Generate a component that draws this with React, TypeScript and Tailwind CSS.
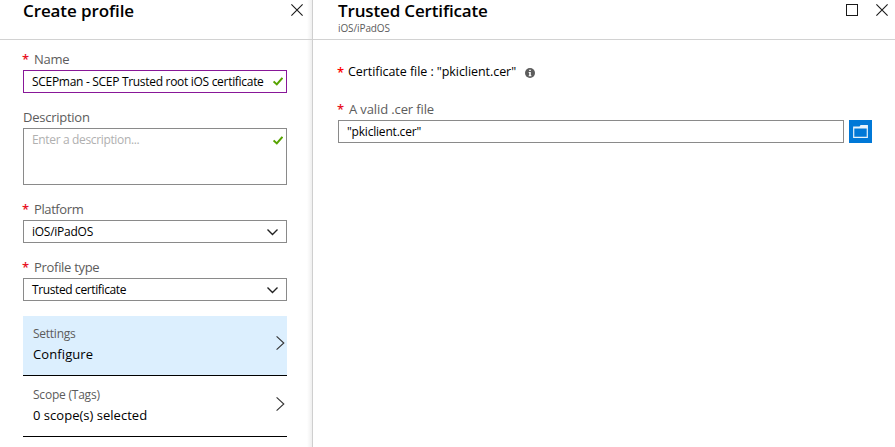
import type { ReactNode } from "react";

function CloseIcon() {
  return (
    <svg width="12" height="12" viewBox="0 0 12 12" fill="none" stroke="#1a1a1a" strokeWidth="1.1">
      <path d="M0.4 0.4 11.6 11.6M11.6 0.4 0.4 11.6" />
    </svg>
  );
}

function CheckIcon() {
  return (
    <svg width="10" height="9" viewBox="0 0 10 9" fill="none" stroke="#57a300" strokeWidth="2">
      <path d="M0.6 4.4 3.8 7.4 9.4 0.8" />
    </svg>
  );
}

function ChevronDown() {
  return (
    <svg width="12" height="8" viewBox="0 0 12 8" fill="none" stroke="#222" strokeWidth="1.4">
      <path d="M0.5 1.6 5.5 6.6 10.5 1.6" />
    </svg>
  );
}

function ChevronRight() {
  return (
    <svg width="9" height="14" viewBox="0 0 9 14" fill="none" stroke="#333" strokeWidth="1.1">
      <path d="M0.6 0.4 7.8 7 0.6 13.6" />
    </svg>
  );
}

function Star({ className = "text-[#e81123]" }: { className?: string }) {
  return <span className={`-ml-px w-3 shrink-0 text-[13px] font-semibold ${className}`}>*</span>;
}

function Label({ children, tracking, required = false }: { children: ReactNode; tracking: string; required?: boolean }) {
  return (
    <div className={`flex h-5 text-[13px] text-[#5c5c5c] ${required ? "leading-[18px]" : "leading-[19px]"}`}>
      {required && <Star />}
      <span className={tracking}>{children}</span>
    </div>
  );
}

function Select({ value, tracking }: { value: string; tracking: string }) {
  return (
    <div className="flex h-[23px] items-center justify-between border border-[#8a8a8a] pr-[7px] pl-2">
      <span className={`text-[12px] leading-5 ${tracking}`}>{value}</span>
      <ChevronDown />
    </div>
  );
}

function PickerRow({ title, value, active = false, titleTracking, valueTracking }: { title: string; value: string; active?: boolean; titleTracking: string; valueTracking: string }) {
  return (
    <div className={`flex justify-between border-b border-black pr-[2px] pl-[10px] ${active ? "h-[60px] bg-[#dceffe]" : "h-[61px] pt-px"}`}>
      <div className="pt-2">
        <div className={`h-5 text-[12px] leading-5 text-[#5c5c5c] ${titleTracking}`}>{title}</div>
        <div className={`h-5 text-[13px] leading-5 ${valueTracking}`}>{value}</div>
      </div>
      <div className="pt-5">
        <ChevronRight />
      </div>
    </div>
  );
}

export default function App() {
  return (
    <div className="flex h-[447px] w-[895px] overflow-hidden bg-white font-['Open_Sans','Noto_Sans',sans-serif] whitespace-nowrap text-black">
      <section className="flex w-[313px] shrink-0 border-r border-[#cfcfcf]">
        <div className="w-[307px] shrink-0">
          <header className="flex h-10 justify-between border-b border-[#d2d2d2] pr-1 pl-[23px]">
            <h1 className="text-[17px] leading-[22px] font-semibold tracking-[-0.1px]">Create profile</h1>
            <div className="pt-1">
              <CloseIcon />
            </div>
          </header>
          <div className="w-[287px] pt-[10px] pl-[23px]">
            <Label required tracking="tracking-[-0.3px]">Name</Label>
            <div className="flex h-[23px] items-center justify-between border border-[#881798] pr-[3px] pl-2">
              <span className="text-[12px] leading-5 tracking-[-0.3px]">SCEPman - SCEP Trusted root iOS certificate</span>
              <CheckIcon />
            </div>
            <div className="pt-[15px]">
              <Label tracking="tracking-[-0.25px]">Description</Label>
              <div className="flex h-[57px] justify-between border border-[#8a8a8a] pt-px pr-[3px] pl-2">
                <span className="text-[12px] leading-5 tracking-[-0.35px] text-[#b0b0b0]">Enter a description...</span>
                <div className="pt-[6px]">
                  <CheckIcon />
                </div>
              </div>
            </div>
            <div className="pt-[15px]">
              <Label required tracking="tracking-[-0.4px]">Platform</Label>
              <Select value="iOS/iPadOS" tracking="tracking-[-0.25px]" />
            </div>
            <div className="pt-[15px] pb-[15px]">
              <Label required tracking="tracking-[-0.3px]">Profile type</Label>
              <Select value="Trusted certificate" tracking="tracking-[-0.38px]" />
            </div>
            <PickerRow active title="Settings" value="Configure" titleTracking="tracking-[-0.25px]" valueTracking="tracking-[0.1px]" />
            <PickerRow title="Scope (Tags)" value="0 scope(s) selected" titleTracking="tracking-[-0.22px]" valueTracking="tracking-[0.02px]" />
          </div>
        </div>
        <div className="w-[5px] shrink-0 bg-linear-to-r from-white to-[#efefef]">
          <div className="h-10 border-b border-[#d2d2d2]" />
        </div>
      </section>
      <section className="min-w-0 flex-1">
        <header className="flex h-10 justify-between border-b border-[#d2d2d2] pr-[7px] pl-[25px]">
          <div>
            <h1 className="h-[21px] text-[17px] leading-[22px] font-semibold tracking-[-0.15px]">Trusted Certificate</h1>
            <div className="h-[14px] text-[10px] leading-[14px] tracking-[-0.1px] text-[#5c5c5c]">iOS/iPadOS</div>
          </div>
          <div className="flex items-start gap-[18px] pt-1">
            <div className="size-3 border border-[#1a1a1a]" />
            <CloseIcon />
          </div>
        </header>
        <div className="pt-[22px] pl-[25px]">
          <div className="flex h-5 items-center text-[12.5px] leading-5">
            <Star className="-mr-px text-[#ff0000]" />
            <span className="tracking-[-0.06px]">Certificate file : "pkiclient.cer"</span>
            <svg className="mt-[2px] ml-[9px]" width="10" height="10" viewBox="0 0 10 10">
              <circle cx="5" cy="5" r="5" fill="#5c5c5c" />
              <path d="M4.2 1.7h1.6v1.4H4.2zM3.7 4h2.1v3.3h.6v.9H3.7v-.9h.5V4.9h-.5z" fill="#fff" />
            </svg>
          </div>
          <div className="pt-[18px]">
            <Label required tracking="tracking-[-0.12px]">A valid .cer file</Label>
            <div className="flex gap-[5px]">
              <div className="flex h-[23px] w-[506px] items-center border border-[#8a8a8a] pl-2">
                <span className="text-[12px] leading-5 tracking-[-0.2px]">"pkiclient.cer"</span>
              </div>
              <button className="flex size-[23px] items-center justify-center bg-[#0078d7]">
                <svg width="15" height="13" viewBox="0 0 15 13" fill="none">
                  <path d="M0.7 12.3V2.2H6.6L8.2 0.7H14.3V12.3Z" stroke="#e6f2fb" strokeWidth="1.2" />
                  <path d="M7 1.2H14V2.8H1" stroke="#e6f2fb" strokeWidth="1.4" />
                </svg>
              </button>
            </div>
          </div>
        </div>
      </section>
    </div>
  );
}
